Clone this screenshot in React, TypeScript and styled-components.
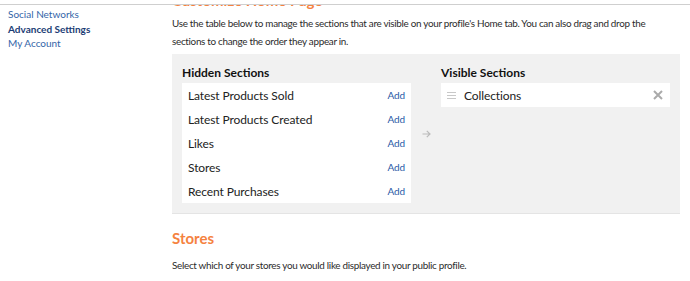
import React from 'react';
import styled, { createGlobalStyle } from 'styled-components';

const GlobalStyle = createGlobalStyle`
  html, body {
    margin: 0;
    padding: 0;
    background: #fff;
    overflow: hidden;
  }
  body {
    font-family: Lato, "Open Sans", Arial, sans-serif;
    color: #333;
  }
`;

const TopBar = styled.div`
  position: fixed;
  top: 0;
  left: 0;
  right: 0;
  height: 4px;
  background: #fff;
  border-bottom: 1px solid #cfcfcf;
  z-index: 2;
`;

const Page = styled.div`
  display: flex;
  width: 690px;
  height: 281px;
  overflow: hidden;
`;

const Sidebar = styled.nav`
  width: 164px;
  padding: 7px 0 0 8px;
  display: flex;
  flex-direction: column;
`;

const SideLink = styled.a<{ $active?: boolean }>`
  font-size: 10px;
  line-height: 14.5px;
  color: ${p => (p.$active ? '#1c3d75' : '#3465a8')};
  font-weight: ${p => (p.$active ? 700 : 400)};
  text-decoration: none;
`;

const Main = styled.main`
  width: 508px;
  display: flex;
  flex-direction: column;
  margin-top: -9px;
`;

const Heading = styled.h2<{ $space?: number }>`
  margin: 0;
  font-size: 15px;
  font-weight: 700;
  line-height: 18px;
  color: #f5823f;
  margin-top: ${p => p.$space ?? 0}px;
`;

const Text = styled.p`
  margin: 0;
  font-size: 9.9px;
  letter-spacing: -0.3px;
  line-height: 18px;
  color: #2b2b2b;
`;

const Intro = styled(Text)`
  margin-top: 5px;
  max-width: 476px;
`;

const StoresText = styled(Text)`
  margin-top: 9px;
`;

const Panel = styled.div`
  margin-top: 4px;
  background: #f1f1f1;
  border-bottom: 1px solid #e4e4e4;
  padding: 11px 10px 10px 10px;
  display: flex;
  align-items: flex-start;
`;

const Column = styled.div`
  width: 229px;
  display: flex;
  flex-direction: column;
`;

const ColumnTitle = styled.h3`
  margin: 0 0 3px;
  font-size: 12px;
  font-weight: 700;
  line-height: 15px;
  color: #111;
`;

const List = styled.ul`
  list-style: none;
  margin: 0;
  padding: 0;
  background: #fff;
`;

const Row = styled.li`
  height: 24px;
  display: flex;
  align-items: center;
  padding: 0 6px;
  font-size: 12px;
  letter-spacing: -0.1px;
  color: #222;
`;

const RowLabel = styled.span`
  flex: 1;
`;

const AddLink = styled.a`
  font-size: 10px;
  color: #2a5aa6;
  text-decoration: none;
`;

const ArrowCell = styled.div`
  width: 30px;
  align-self: stretch;
  display: flex;
  align-items: center;
  justify-content: center;
  color: #bbb;
`;

const Handle = styled.span`
  width: 9px;
  margin-right: 8px;
  display: flex;
  flex-direction: column;
  gap: 2px;

  & > i {
    display: block;
    height: 1px;
    background: #c8c8c8;
  }
`;

const RemoveBtn = styled.span`
  color: #aaa;
  display: flex;
  margin-right: 1px;
`;

const hidden = [
  'Latest Products Sold',
  'Latest Products Created',
  'Likes',
  'Stores',
  'Recent Purchases',
];

const App: React.FC = () => {
  return (
    <>
      <GlobalStyle />
      <TopBar />
      <Page>
        <Sidebar>
          <SideLink href="#">Social Networks</SideLink>
          <SideLink href="#" $active>Advanced Settings</SideLink>
          <SideLink href="#">My Account</SideLink>
        </Sidebar>
        <Main>
          <Heading>Customize Home Page</Heading>
          <Intro>
            Use the table below to manage the sections that are visible on your profile's Home tab. You can also drag and drop the
            sections to change the order they appear in.
          </Intro>
          <Panel>
            <Column>
              <ColumnTitle>Hidden Sections</ColumnTitle>
              <List>
                {hidden.map(name => (
                  <Row key={name}>
                    <RowLabel>{name}</RowLabel>
                    <AddLink href="#">Add</AddLink>
                  </Row>
                ))}
              </List>
            </Column>
            <ArrowCell>
              <svg width="9" height="8" viewBox="0 0 9 8" fill="none" stroke="currentColor" strokeWidth="1.2">
                <path d="M0.5 4h7.5M4.8 0.8L8 4l-3.2 3.2" />
              </svg>
            </ArrowCell>
            <Column>
              <ColumnTitle>Visible Sections</ColumnTitle>
              <List>
                <Row>
                  <Handle><i /><i /><i /></Handle>
                  <RowLabel>Collections</RowLabel>
                  <RemoveBtn>
                    <svg width="10" height="10" viewBox="0 0 10 10" stroke="currentColor" strokeWidth="2">
                      <path d="M1 1l8 8M9 1l-8 8" />
                    </svg>
                  </RemoveBtn>
                </Row>
              </List>
            </Column>
          </Panel>
          <Heading $space={15}>Stores</Heading>
          <StoresText>Select which of your stores you would like displayed in your public profile.</StoresText>
        </Main>
      </Page>
    </>
  );
};

export default App;
